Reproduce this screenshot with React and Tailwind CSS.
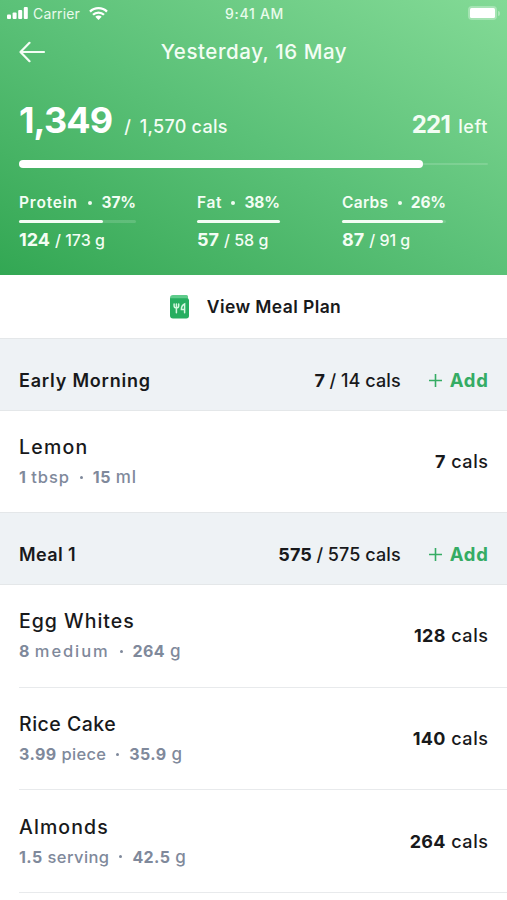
import clsx from "clsx";

const macros = [
    {
        name: "Protein",
        percent: "37%",
        eaten: "124",
        goal: "173 g",
        progress: 72,
        className: "w-[117px] mr-[61px]",
        nameClass: "tracking-[0.8px]",
    },
    {
        name: "Fat",
        percent: "38%",
        eaten: "57",
        goal: "58 g",
        progress: 100,
        className: "w-[83px] mr-[62px]",
        nameClass: "tracking-[0.6px]",
    },
    {
        name: "Carbs",
        percent: "26%",
        eaten: "87",
        goal: "91 g",
        progress: 97,
        className: "w-[104px]",
        nameClass: "tracking-[0.3px]",
    },
];

const meals = [
    {
        name: "Early Morning",
        nameClass: "tracking-[0.8px]",
        eaten: "7",
        goal: "14 cals",
        items: [
            {
                name: "Lemon",
                nameClass: "tracking-[1.2px]",
                amount: "1",
                unit: "tbsp",
                unitClass: "tracking-[0.9px]",
                weight: "15",
                weightUnit: "ml",
                cals: "7",
            },
        ],
    },
    {
        name: "Meal 1",
        nameClass: "tracking-[0.4px]",
        eaten: "575",
        goal: "575 cals",
        items: [
            {
                name: "Egg Whites",
                nameClass: "tracking-[1px]",
                amount: "8",
                unit: "medium",
                unitClass: "tracking-[1.9px]",
                weight: "264",
                weightUnit: "g",
                cals: "128",
            },
            {
                name: "Rice Cake",
                nameClass: "tracking-[0.5px]",
                amount: "3.99",
                unit: "piece",
                unitClass: "tracking-[0.3px]",
                weight: "35.9",
                weightUnit: "g",
                cals: "140",
            },
            {
                name: "Almonds",
                nameClass: "tracking-[1.1px]",
                amount: "1.5",
                unit: "serving",
                unitClass: "tracking-[0.4px]",
                weight: "42.5",
                weightUnit: "g",
                cals: "264",
            },
        ],
    },
];

function StatusBar() {
    return (
        <div className="grid h-[26px] grid-cols-3 items-center px-[7px] text-[14px] text-[#e9fbec]">
            <div className="flex items-center">
                <svg width="21" height="12" viewBox="0 0 21 12" fill="#fff">
                    <rect x="0" y="7.5" width="4" height="4.5" rx="1" />
                    <rect x="5.6" y="5.5" width="4" height="6.5" rx="1" />
                    <rect x="11.2" y="3" width="4" height="9" rx="1" />
                    <rect x="16.8" y="0" width="4" height="12" rx="1" />
                </svg>
                <span className="ml-[5px] w-[46px] tracking-[0.15px]">
                    Carrier
                </span>
                <svg
                    className="ml-[10px]"
                    width="19"
                    height="13"
                    viewBox="0 0 19 13"
                    fill="none"
                    stroke="#fff"
                    strokeWidth="2.3"
                >
                    <path d="M1 4.6a12.2 12.2 0 0 1 17 0" />
                    <path d="M4 7.8a7.8 7.8 0 0 1 11 0" />
                    <path
                        d="M9.5 13 6.3 9.8a4.6 4.6 0 0 1 6.4 0z"
                        fill="#fff"
                        stroke="none"
                    />
                </svg>
            </div>
            <span className="pl-[2px] text-center font-medium tracking-[0.7px]">
                9:41 AM
            </span>
            <div className="flex items-center justify-end">
                <div className="h-[14px] w-[29px] rounded-[4px] bg-white/30 p-[2px]">
                    <div className="h-full rounded-[1.5px] bg-white"></div>
                </div>
                <div className="ml-px h-[5px] w-[1.5px] rounded-r bg-white/35"></div>
            </div>
        </div>
    );
}

function Macro({ macro }) {
    return (
        <div className={macro.className}>
            <div className="flex h-5 items-center justify-between text-[15.5px] leading-5 whitespace-nowrap">
                <span className={clsx("font-semibold", macro.nameClass)}>
                    {macro.name}
                </span>
                <span className="h-1 w-1 rounded-full bg-[#effcf1]"></span>
                <span className="font-bold tracking-[-0.1px]">
                    {macro.percent}
                </span>
            </div>
            <div className="mt-[7px] h-[3px] rounded-full bg-white/15">
                <div
                    className="h-full rounded-full bg-[#f3fdf4]"
                    style={{ width: `${macro.progress}%` }}
                ></div>
            </div>
            <div className="mt-[5px] flex h-6 items-baseline leading-6 whitespace-nowrap">
                <span className="text-[18px] font-bold">{macro.eaten}</span>
                <span className="ml-[5px] text-[16px] font-medium">
                    / {macro.goal}
                </span>
            </div>
        </div>
    );
}

function Header() {
    return (
        <header className="h-[275px] bg-linear-to-tr from-[#32a753] via-[#5bc178] to-[#83da96] text-[#f3fdf4]">
            <StatusBar />

            <div className="grid h-[52px] grid-cols-[27px_1fr_27px] items-center px-[19px]">
                <svg
                    width="27"
                    height="22"
                    viewBox="0 0 27 22"
                    fill="none"
                    stroke="currentColor"
                    strokeWidth="2.2"
                    strokeLinecap="round"
                    strokeLinejoin="round"
                >
                    <path d="M25 11H1.5M10.5 1.8 1.5 11l9 9.2" />
                </svg>
                <h1 className="pl-px text-center text-[20.5px] font-medium tracking-[0.55px]">
                    Yesterday, 16 May
                </h1>
            </div>

            {/* Daily calories */}
            <div className="mt-[22px] flex h-10 items-baseline px-[19px] leading-10 font-medium whitespace-nowrap">
                <span className="text-[36px] font-bold tracking-[-0.9px] text-white">
                    1,349
                </span>
                <span className="ml-[12px] text-[18px]">/</span>
                <span className="ml-[9px] text-[18px] tracking-[0.25px]">
                    1,570 cals
                </span>
                <span className="ml-auto text-[24px] font-bold tracking-[-0.7px]">
                    221
                </span>
                <span className="ml-[8px] text-[18px] tracking-[0.6px]">
                    left
                </span>
            </div>

            <div className="mx-[19px] mt-[20px] flex h-2 items-center">
                <div className="h-2 w-[404px] rounded-full bg-white"></div>
                <div className="h-[2px] flex-1 rounded-r-full bg-white/15"></div>
            </div>

            <div className="mt-[25px] flex px-[19px]">
                {macros.map((macro) => (
                    <Macro key={macro.name} macro={macro} />
                ))}
            </div>
        </header>
    );
}

function MealPlanIcon() {
    return (
        <svg width="19" height="24" viewBox="0 0 19 24" fill="none">
            <path
                d="M3 0h13.5a1.5 1.5 0 0 1 1.5 1.5V6H0V3a3 3 0 0 1 3-3z"
                fill="#5fcb8b"
            />
            <path
                d="M0 3.2h17a2 2 0 0 1 2 2v15.6a2.7 2.7 0 0 1-2.7 2.7H3a3 3 0 0 1-3-3z"
                fill="#27ae60"
            />
            <g stroke="#d5f7e0" strokeWidth="1.5" strokeLinecap="round">
                <path d="M4.1 9v1.8a2.3 2.3 0 0 0 4.6 0V9M6.4 9v8.7" />
                <path d="M14.6 17.7V9c-1.9.8-3.2 2.9-3.2 5.4h3.2" />
            </g>
        </svg>
    );
}

function FoodRow({ item, endsSection }) {
    return (
        <div
            className={clsx(
                "ml-[19px] flex items-center justify-between pr-[19px] whitespace-nowrap",
                endsSection
                    ? "h-[101px]"
                    : "h-[102.7px] border-b border-[#e8eaec]"
            )}
        >
            <div className="pt-px">
                <p
                    className={clsx(
                        "text-[19.5px] leading-[30px] font-medium",
                        item.nameClass
                    )}
                >
                    {item.name}
                </p>
                <p className="flex items-baseline text-[16px] leading-[30px] font-medium tracking-[0.4px] text-[#7f899b]">
                    <span className="font-bold">{item.amount}</span>
                    <span
                        className={clsx(
                            "ml-[5px] text-[16.5px]",
                            item.unitClass
                        )}
                    >
                        {item.unit}
                    </span>
                    <span className="mx-[10px] h-[3px] w-[3px] self-center rounded-full bg-[#7f899b]"></span>
                    <span className="font-bold">{item.weight}</span>
                    <span className="ml-[5px] text-[17px] tracking-[0.8px]">
                        {item.weightUnit}
                    </span>
                </p>
            </div>
            <p className="-mr-[0.6px] text-[18px] font-medium tracking-[0.6px]">
                <span className="font-bold tracking-[0.3px]">{item.cals}</span>{" "}
                cals
            </p>
        </div>
    );
}

function Meal({ meal, followed }) {
    return (
        <section>
            <div className="flex h-[73px] items-center border-y border-[#e4e7e9] bg-[#eef2f5] px-[19px] pt-[12px] text-[18px] whitespace-nowrap">
                <h2 className={clsx("font-semibold", meal.nameClass)}>
                    {meal.name}
                </h2>
                <p className="ml-auto font-medium tracking-[0.1px]">
                    <span className="font-bold">{meal.eaten}</span>
                    <span className="mx-[4.5px]">/</span>
                    {meal.goal}
                </p>
                <button className="ml-[28px] flex items-center text-[18.5px] font-bold tracking-[0.7px] text-[#35ac64]">
                    <svg
                        className="mr-[8px]"
                        width="13"
                        height="13"
                        viewBox="0 0 13 13"
                        stroke="currentColor"
                        strokeWidth="1.6"
                    >
                        <path d="M6.5 0v13M0 6.5h13" />
                    </svg>
                    <span className="-mr-[0.5px]">Add</span>
                </button>
            </div>
            {meal.items.map((item, index) => (
                <FoodRow
                    key={item.name}
                    item={item}
                    endsSection={followed && index === meal.items.length - 1}
                />
            ))}
        </section>
    );
}

export default function App() {
    return (
        <main className="h-[900px] w-[507px] overflow-hidden bg-white font-['Inter',sans-serif] text-[#18191b]">
            <Header />
            <button className="flex h-[63px] w-full items-center justify-center pt-px pl-[4px] text-[17.5px] font-semibold tracking-[0.4px]">
                <MealPlanIcon />
                <span className="ml-[18px]">View Meal Plan</span>
            </button>
            {meals.map((meal, index) => (
                <Meal
                    key={meal.name}
                    meal={meal}
                    followed={index < meals.length - 1}
                />
            ))}
        </main>
    );
}
